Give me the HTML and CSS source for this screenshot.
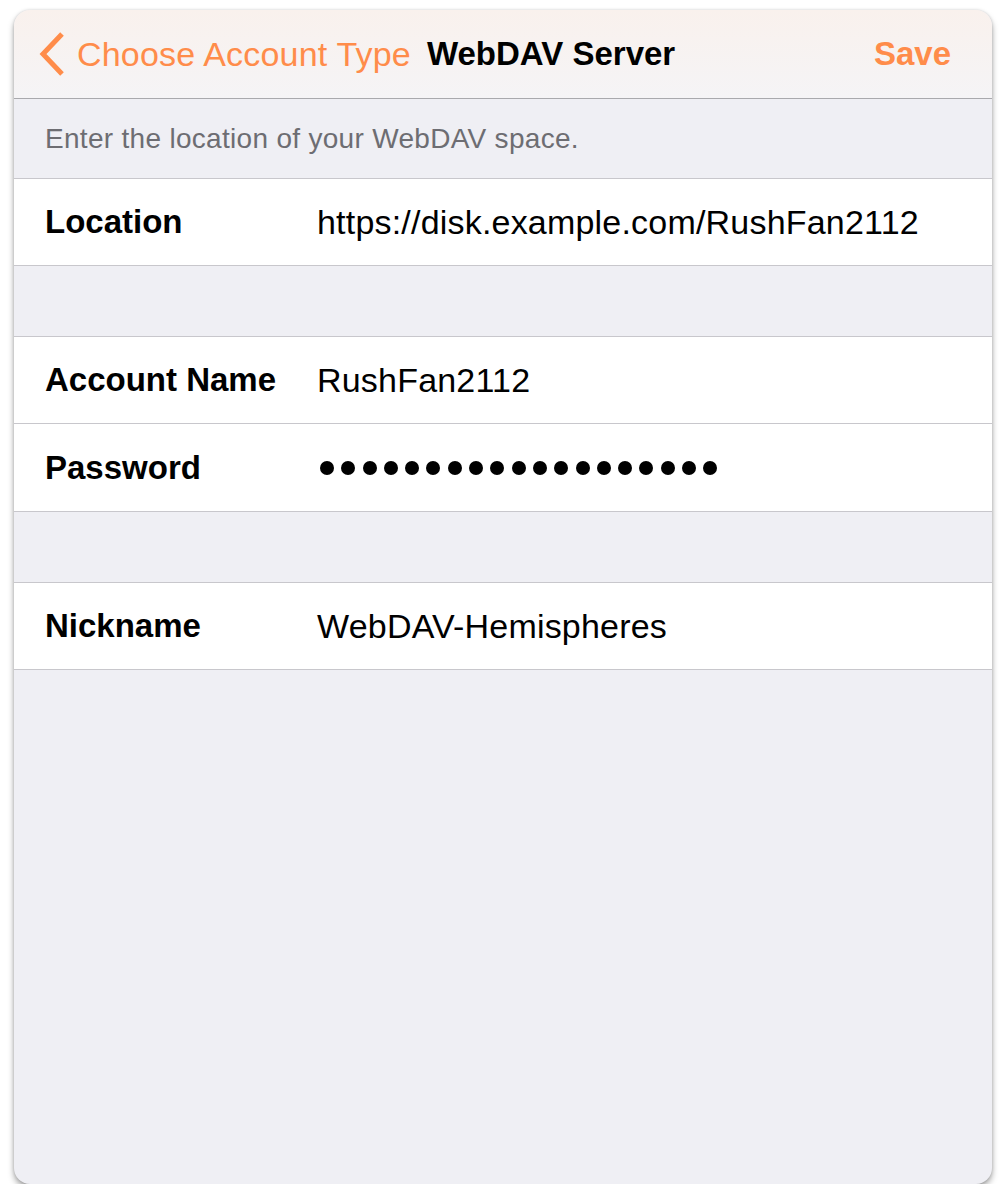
FILE: index.html
```html
<!DOCTYPE html>
<html lang="en">
<head>
    <meta charset="UTF-8">
    <title>WebDAV Server</title>
    <link rel="stylesheet" href="styles.css">
</head>
<body>
    <div class="panel">
        <div class="navbar">
            <a class="back" href="#">
                <svg class="chevron" width="28" height="44" viewBox="0 0 28 44">
                    <path d="M24 2 L5 22 L24 42" fill="none" stroke="#ff8c4a" stroke-width="5"/>
                </svg>
                <span>Choose Account Type</span>
            </a>
            <span class="title">WebDAV Server</span>
            <a class="save" href="#">Save</a>
        </div>

        <p class="hint">Enter the location of your WebDAV space.</p>

        <div class="group">
            <div class="row">
                <span class="label">Location</span>
                <span class="value">https://disk.example.com/RushFan2112</span>
            </div>
        </div>

        <div class="group">
            <div class="row">
                <span class="label">Account Name</span>
                <span class="value">RushFan2112</span>
            </div>
            <div class="row">
                <span class="label">Password</span>
                <span class="value dots">
                    <i></i><i></i><i></i><i></i><i></i><i></i><i></i><i></i><i></i><i></i>
                    <i></i><i></i><i></i><i></i><i></i><i></i><i></i><i></i><i></i>
                </span>
            </div>
        </div>

        <div class="group">
            <div class="row">
                <span class="label">Nickname</span>
                <span class="value">WebDAV-Hemispheres</span>
            </div>
        </div>
    </div>
</body>
</html>
```

FILE: styles.css
```css
body {
    margin: 0;
    background-color: #fff;
    font-family: 'Liberation Sans', Arial, sans-serif;
    color: #000;
}
.panel {
    margin: 10px 14px 0 14px;
    height: 1174px;
    background-color: #efeff4;
    border-radius: 16px;
    overflow: hidden;
    box-shadow: 0 4px 6px rgba(0,0,0,0.35), 0 0 3px rgba(0,0,0,0.15);
}
.navbar {
    height: 88px;
    display: flex;
    align-items: center;
    padding: 0 41px 0 24px;
    background: linear-gradient(#f9f1ed, #f5f4f6);
    border-bottom: 1px solid #a9a9ad;
}
.back {
    display: flex;
    align-items: center;
    color: #ff8c4a;
    text-decoration: none;
    font-size: 34px;
    letter-spacing: 0.2px;
}
.chevron {
    margin-right: 11px;
}
.title {
    margin-left: 16px;
    font-size: 33px;
    font-weight: bold;
    flex: 1;
}
.save {
    color: #ff8c4a;
    text-decoration: none;
    font-size: 33px;
    font-weight: bold;
}
.hint {
    margin: 0;
    height: 79px;
    box-sizing: border-box;
    padding: 24px 0 0 31px;
    font-size: 28px;
    letter-spacing: 0.3px;
    color: #6d6d72;
}
.group {
    background-color: #fff;
    border-top: 1px solid #c8c7cc;
    border-bottom: 1px solid #c8c7cc;
    margin-bottom: 70px;
}
.row {
    height: 86px;
    display: flex;
    align-items: center;
    padding-left: 31px;
    font-size: 34px;
}
.row + .row {
    border-top: 1px solid #c8c7cc;
    height: 87px;
}
.label {
    width: 272px;
    font-size: 33px;
    font-weight: bold;
}
.value {
    margin-top: 1px;
    letter-spacing: 0.2px;
}
.dots {
    display: flex;
    gap: 7.3px;
    padding-left: 3px;
}
.dots i {
    width: 14px;
    height: 14px;
    border-radius: 50%;
    background-color: #000;
}
```
